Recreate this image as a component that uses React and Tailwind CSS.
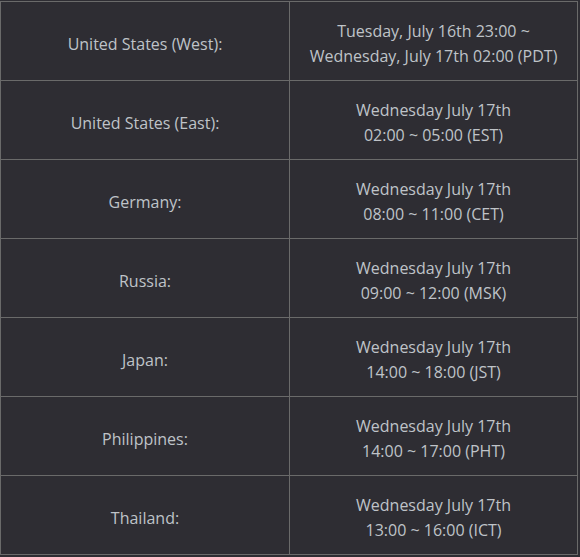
import React from "react";

const rows = [
  ["United States (West):", "Tuesday, July 16th 23:00 ~", "Wednesday, July 17th 02:00 (PDT)"],
  ["United States (East):", "Wednesday July 17th", "02:00 ~ 05:00 (EST)"],
  ["Germany:", "Wednesday July 17th", "08:00 ~ 11:00 (CET)"],
  ["Russia:", "Wednesday July 17th", "09:00 ~ 12:00 (MSK)"],
  ["Japan:", "Wednesday July 17th", "14:00 ~ 18:00 (JST)"],
  ["Philippines:", "Wednesday July 17th", "14:00 ~ 17:00 (PHT)"],
  ["Thailand:", "Wednesday July 17th", "13:00 ~ 16:00 (ICT)"],
];

export default function App() {
  return (
    <div className="w-[580px] h-[557px] bg-[#2e2d33] overflow-hidden pt-[1px]" style={{ fontFamily: '"Open Sans", "Noto Sans", sans-serif' }}>
      <table className="w-[578px] border-collapse text-[#bfc3c8] text-[16px] leading-[25px]">
        <tbody>
          {rows.map((r, i) => (
            <tr key={i} className="h-[79px]">
              <td className="w-[289px] border border-[#6a6a6a] text-center align-middle pt-[6px] pb-0 px-0">{r[0]}</td>
              <td className="border border-[#6a6a6a] text-center align-middle pt-[6px] pb-0 px-0">
                <div>{r[1]}</div>
                <div>{r[2]}</div>
              </td>
            </tr>
          ))}
        </tbody>
      </table>
    </div>
  );
}
